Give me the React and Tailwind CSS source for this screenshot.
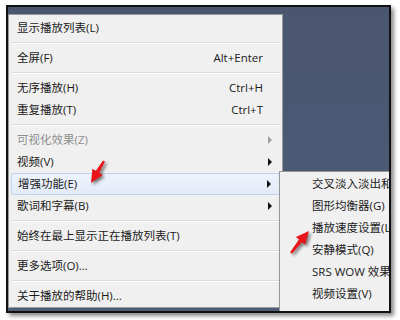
import React from "react";

const Tri = ({ gray }) => (
  <svg width="5" height="8" viewBox="0 0 5 8" className="ml-[5px]">
    <polygon points="0,0 4,4 0,8" fill={gray ? "#a0a0a0" : "#111"} />
  </svg>
);

const Item = ({ label, shortcut, sub, gray, hl }) => (
  <div
    className={
      "h-[22px] flex items-center pl-[6px] " +
      (hl
        ? "bg-gradient-to-b from-[#eef3fb] to-[#e3ebf8] border border-[#bcd2ef] rounded-[2px] pl-[5px]"
        : "")
    }
  >
    <span className={"flex-1 whitespace-nowrap " + (gray ? "text-[#8e8e8e]" : "text-[#1a1a1a]")}>
      {label}
    </span>
    {shortcut && <span className="whitespace-nowrap text-[#1a1a1a]">{shortcut}</span>}
    <span className="w-[17px] flex items-center">{sub && <Tri gray={gray} />}</span>
  </div>
);

const Sep = () => (
  <div className="h-[8px] flex flex-col justify-center">
    <div className="h-px bg-[#dadada]" />
    <div className="h-px bg-white" />
  </div>
);

const SubItem = ({ label }) => (
  <div className="h-[22px] flex items-center pl-[30px] whitespace-nowrap text-[#1a1a1a]">{label}</div>
);

export default function App() {
  return (
    <div className="relative w-[400px] h-[320px] bg-white pt-[5px] pl-[6px] font-['Open_Sans','Noto_Sans_CJK_SC',sans-serif] text-[11.5px] leading-none">
      <div className="relative w-[385px] h-[308px] border-2 border-[#111] bg-gradient-to-b from-[#4a5670] to-[#4e5c79] overflow-hidden pt-[7px] shadow-[3px_3px_4px_rgba(0,0,0,0.45)]">
        <div className="w-[275px] bg-[#f0f0f0] border border-[#9a9a9a] pt-[2px] px-[2px]">
          <Item label="显示播放列表(L)" />
          <Sep />
          <Item label="全屏(F)" shortcut="Alt+Enter" />
          <Sep />
          <Item label="无序播放(H)" shortcut="Ctrl+H" />
          <Item label="重复播放(T)" shortcut="Ctrl+T" />
          <Sep />
          <Item label="可视化效果(Z)" sub gray />
          <Item label="视频(V)" sub />
          <Item label="增强功能(E)" sub hl />
          <Item label="歌词和字幕(B)" sub />
          <Sep />
          <Item label="始终在最上显示正在播放列表(T)" />
          <Sep />
          <Item label="更多选项(O)..." />
          <Sep />
          <Item label="关于播放的帮助(H)..." />
        </div>
        <div className="absolute left-[271px] top-[164px] w-[150px] h-[160px] bg-[#f0f0f0] border border-[#979797] pt-[1px] px-[2px] shadow-[2px_2px_3px_rgba(0,0,0,0.3)]">
          <SubItem label="交叉淡入淡出和自动音量调节(C)" />
          <SubItem label="图形均衡器(G)" />
          <SubItem label="播放速度设置(L)" />
          <SubItem label="安静模式(Q)" />
          <SubItem label="SRS WOW 效果(S)" />
          <SubItem label="视频设置(V)" />
        </div>
      </div>
      <svg
        className="absolute left-0 top-0 drop-shadow-[2px_2px_1.5px_rgba(0,0,0,0.5)]"
        width="400"
        height="320"
        viewBox="0 0 400 320"
      >
        <polygon
          points="91,183 92.4,168.7 95.9,170.8 103,160.4 105,161.6 99.3,172.8 102.8,174.9"
          fill="#e8161b"
        />
        <polygon
          points="309,231 305.1,244.8 302,242.2 291.9,253.8 290.1,252.2 299,239.6 295.9,237"
          fill="#e8161b"
        />
      </svg>
    </div>
  );
}
